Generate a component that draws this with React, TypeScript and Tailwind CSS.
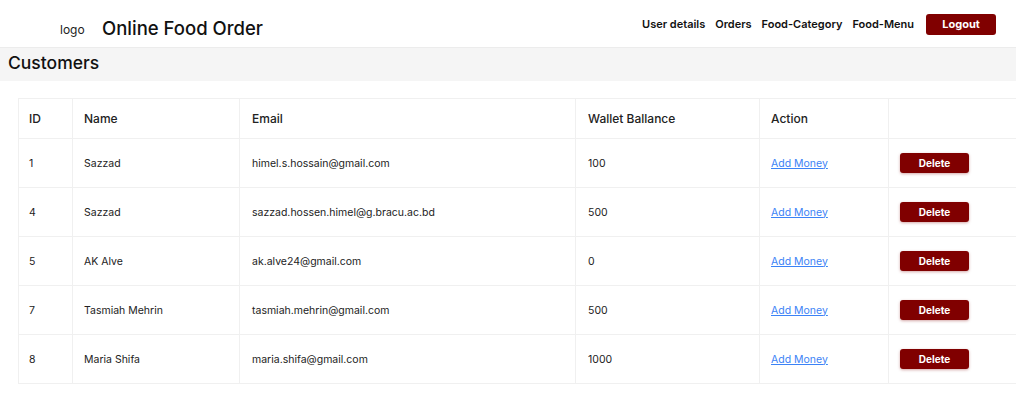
const customers = [
  { id: 1, name: "Sazzad", email: "himel.s.hossain@gmail.com", wallet: 100 },
  { id: 4, name: "Sazzad", email: "sazzad.hossen.himel@g.bracu.ac.bd", wallet: 500 },
  { id: 5, name: "AK Alve", email: "ak.alve24@gmail.com", wallet: 0 },
  { id: 7, name: "Tasmiah Mehrin", email: "tasmiah.mehrin@gmail.com", wallet: 500 },
  { id: 8, name: "Maria Shifa", email: "maria.shifa@gmail.com", wallet: 1000 },
];

const navLinks = ["User details", "Orders", "Food-Category", "Food-Menu"];

export default function App() {
  return (
    <div className="w-[1016px] h-[401px] overflow-hidden bg-white text-[#111] font-['Inter',sans-serif]">
      {/* Header */}
      <div className="h-[48px] flex items-center border-b border-[#ececec]">
        <div className="w-[102px] pl-[60px] pt-[13px] text-[12px] text-[#222]">logo</div>
        <div className="pt-[11px] text-[18.5px] font-medium">Online Food Order</div>
        <div className="ml-auto flex items-center gap-[10px] pr-[20px] pt-[2px]">
          {navLinks.map(l => (
            <a key={l} className="text-[11px] font-semibold text-[#111]">{l}</a>
          ))}
          <button className="ml-[2px] w-[70px] h-[21px] rounded-[3px] bg-[#800000] text-white text-[11px] font-bold">
            Logout
          </button>
        </div>
      </div>

      {/* Title band */}
      <div className="h-[33px] bg-[#f5f5f5] pl-[8px] flex items-center">
        <h2 className="pb-[3px] text-[17.5px] font-medium text-[#111]">Customers</h2>
      </div>

      {/* Table */}
      <div className="pl-[18px] pt-[17px]">
        <table className="w-[1100px] border-collapse text-left">
          <thead>
            <tr className="h-[40px] text-[12px] font-medium text-[#222]">
              <th className="w-[54px] pl-[10px] font-medium border border-[#f0f0f0]">ID</th>
              <th className="w-[167px] pl-[11px] font-medium border border-[#f0f0f0]">Name</th>
              <th className="w-[336px] pl-[12px] font-medium border border-[#f0f0f0]">Email</th>
              <th className="w-[184px] pl-[12px] font-medium border border-[#f0f0f0]">Wallet Ballance</th>
              <th className="w-[129px] pl-[11px] font-medium border border-[#f0f0f0]">Action</th>
              <th className="border border-[#f0f0f0]"></th>
            </tr>
          </thead>
          <tbody>
            {customers.map(c => (
              <tr key={c.id} className="h-[49px] text-[10.5px] text-[#222]">
                <td className="pl-[10px] pt-[1px] border border-[#f0f0f0]">{c.id}</td>
                <td className="pl-[11px] pt-[1px] border border-[#f0f0f0]">{c.name}</td>
                <td className="pl-[12px] pt-[1px] border border-[#f0f0f0]">{c.email}</td>
                <td className="pl-[12px] pt-[1px] border border-[#f0f0f0]">{c.wallet}</td>
                <td className="pl-[11px] pt-[1px] border border-[#f0f0f0]">
                  <a className="text-[#3b82f6] underline">Add Money</a>
                </td>
                <td className="pl-[11px] border border-[#f0f0f0]">
                  <button className="w-[69px] h-[20px] rounded-[3px] bg-[#800000] text-white text-[10px] font-bold shadow-[0_1px_3px_rgba(128,0,0,0.35)]">
                    Delete
                  </button>
                </td>
              </tr>
            ))}
          </tbody>
        </table>
      </div>
    </div>
  );
}
